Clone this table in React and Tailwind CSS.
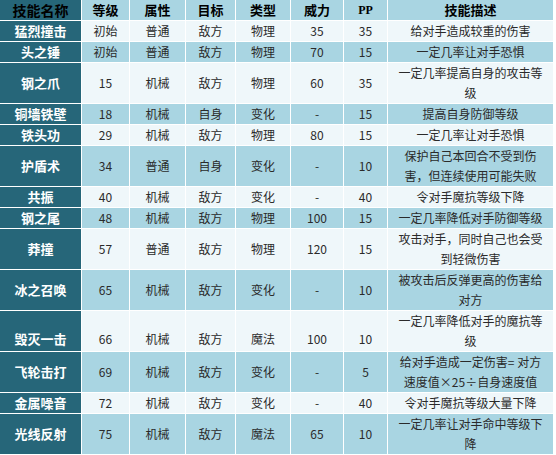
import React from "react";

const rows = [
  ["猛烈撞击", "初始", "普通", "敌方", "物理", "35", "35", ["给对手造成较重的伤害"]],
  ["头之锤", "初始", "普通", "敌方", "物理", "70", "15", ["一定几率让对手恐惧"]],
  ["钢之爪", "15", "机械", "敌方", "物理", "60", "35", ["一定几率提高自身的攻击等", "级"]],
  ["铜墙铁壁", "18", "机械", "自身", "变化", "-", "15", ["提高自身防御等级"]],
  ["铁头功", "29", "机械", "敌方", "物理", "80", "15", ["一定几率让对手恐惧"]],
  ["护盾术", "34", "普通", "自身", "变化", "-", "10", ["保护自己本回合不受到伤", "害，但连续使用可能失败"]],
  ["共振", "40", "机械", "敌方", "变化", "-", "40", ["令对手魔抗等级下降"]],
  ["钢之尾", "48", "机械", "敌方", "物理", "100", "15", ["一定几率降低对手防御等级"]],
  ["莽撞", "57", "普通", "敌方", "物理", "120", "15", ["攻击对手，同时自己也会受", "到轻微伤害"]],
  ["冰之召唤", "65", "机械", "敌方", "变化", "-", "10", ["被攻击后反弹更高的伤害给", "对方"]],
  ["毁灭一击", "66", "机械", "敌方", "魔法", "100", "10", ["一定几率降低对手的魔抗等", "级"], true],
  ["飞轮击打", "69", "机械", "敌方", "变化", "-", "5", ["给对手造成一定伤害= 对方", "速度值×25÷自身速度值"]],
  ["金属噪音", "72", "机械", "敌方", "变化", "-", "40", ["令对手魔抗等级大量下降"]],
  ["光线反射", "75", "机械", "敌方", "魔法", "65", "10", ["一定几率让对手命中等级下", "降"]],
];

const headers = ["等级", "属性", "目标", "类型", "威力"];

export default function App() {
  const font = { fontFamily: '"Noto Sans CJK SC", "Noto Sans", sans-serif' };
  return (
    <div className="w-[556px] h-[455px] overflow-hidden bg-white relative" style={font}>
      <div className="grid grid-cols-[81px_47px_55px_49px_54px_52px_43px_165px] gap-px bg-white w-[554px]">
        <div className="bg-[#266679] h-[20px] flex items-center justify-center text-[14px] font-bold text-black leading-[20px]">
          技能名称
        </div>
        {headers.map((h) => (
          <div key={h} className="bg-[#a9d5e2] h-[20px] flex items-center justify-center text-[13px] font-bold text-black leading-[20px]">
            {h}
          </div>
        ))}
        <div className="bg-[#a9d5e2] h-[20px] flex items-center justify-center text-[12px] font-bold text-black leading-[20px]" style={{ fontFamily: '"Liberation Serif", serif' }}>
          PP
        </div>
        <div className="bg-[#a9d5e2] h-[20px] flex items-center justify-center text-[13px] font-bold text-black leading-[20px]">
          技能描述
        </div>
        {rows.map((r, i) => {
          const bg = i % 2 === 0 ? "bg-[#eff7fa]" : "bg-[#a9d5e2]";
          const shift = r[8] ? "pt-[16px]" : "";
          return (
            <React.Fragment key={i}>
              <div className={`bg-[#266679] flex items-center justify-center text-[13px] font-bold text-white leading-[20px] ${shift}`}>
                {r[0]}
              </div>
              {r.slice(1, 7).map((c, j) => (
                <div key={j} className={`${bg} flex items-center justify-center text-[12px] text-[#2a2a2a] leading-[20px] ${shift}`}>
                  {c}
                </div>
              ))}
              <div className={`${bg} flex flex-col items-center justify-center text-[12px] text-[#2a2a2a] leading-[20px]`}>
                {r[7].map((l, k) => (
                  <span key={k} className="whitespace-nowrap">{l}</span>
                ))}
              </div>
            </React.Fragment>
          );
        })}
      </div>
    </div>
  );
}
